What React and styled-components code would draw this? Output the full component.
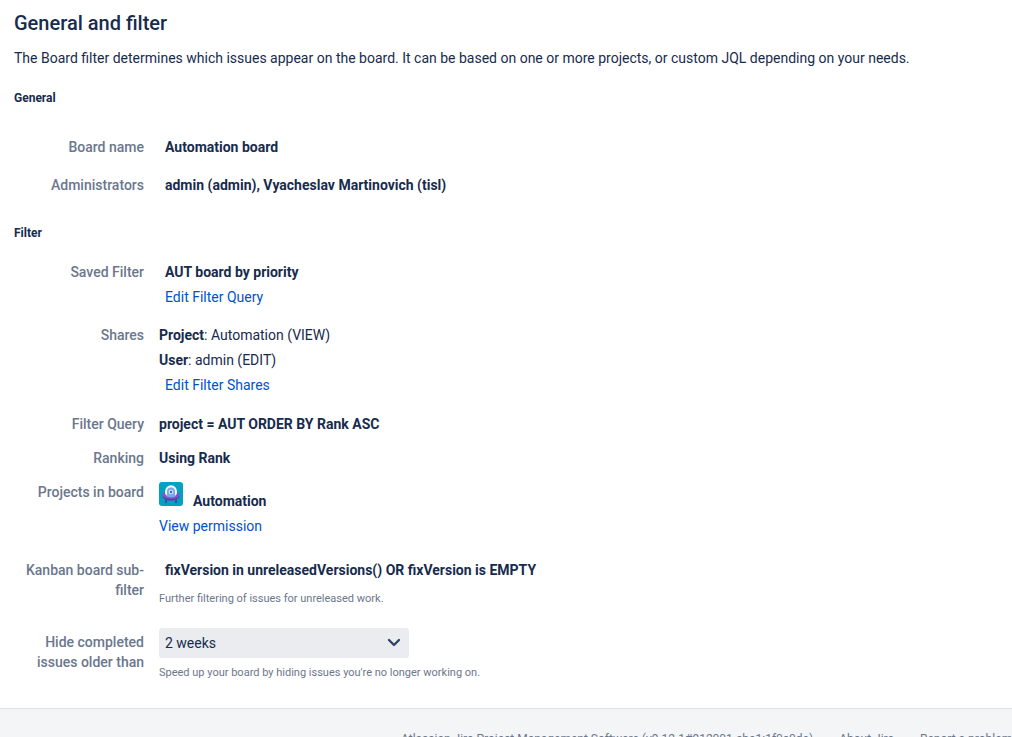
import styled, { createGlobalStyle } from "styled-components";

const GlobalStyle = createGlobalStyle`
  body {
    margin: 0;
    background-color: #ffffff;
    color: #172b4d;
    font-family: Roboto, "Liberation Sans", sans-serif;
    font-size: 14px;
    line-height: 20px;
    overflow-x: hidden;
  }
`;

const MainContent = styled.main`
  padding: 11px 14px 27px;
`;

const Title = styled.h2`
  margin: 0;
  font-size: 20px;
  font-weight: 500;
  line-height: 24px;
`;

const Description = styled.p`
  margin: 13px 0 22px;
`;

const SectionTitle = styled.h3`
  margin: 0;
  font-size: 12px;
  font-weight: 700;
  line-height: 16px;
`;

const Fields = styled.dl`
  display: flex;
  flex-direction: column;
  margin: ${(props) => props.$margin};
`;

const Field = styled.div`
  display: grid;
  grid-template-columns: 130px 1fr;
  column-gap: 15px;

  &:not(:first-child) {
    margin-top: ${(props) => props.$space || "18px"};
  }
`;

const FieldLabel = styled.dt`
  padding-top: ${(props) => (props.$control ? "4px" : "0")};
  color: #6b778c;
  font-weight: 500;
  text-align: right;
`;

const FieldValue = styled.dd`
  display: flex;
  flex-direction: column;
  align-items: flex-start;
  gap: 5px;
  margin: 0;
`;

const Editable = styled.strong`
  padding-left: 6px;
`;

const Link = styled.a`
  padding-left: ${(props) => (props.$indent ? "6px" : "0")};
  color: #0052cc;
  text-decoration: none;

  &:hover {
    text-decoration: underline;
  }
`;

const Help = styled.small`
  padding-top: ${(props) => (props.$space ? "6px" : "2px")};
  color: #6b778c;
  font-size: 11px;
  line-height: 16px;
`;

const Project = styled.div`
  display: flex;
  align-items: baseline;
  gap: 10px;
`;

const SelectBox = styled.div`
  position: relative;
  width: 250px;
  max-width: 100%;

  svg {
    position: absolute;
    top: 10px;
    right: 8px;
    pointer-events: none;
  }
`;

const Select = styled.select`
  appearance: none;
  display: block;
  width: 100%;
  height: 30px;
  padding: 0 30px 0 6px;
  border: 0;
  border-radius: 3px;
  background-color: #ebecf0;
  color: #172b4d;
  font: inherit;
`;

const Footer = styled.footer`
  padding: 21px 0 24px 401px;
  border-top: 1px solid #dfe1e5;
  background-color: #f4f5f7;
  overflow: hidden;
`;

const FooterList = styled.ul`
  display: flex;
  gap: 26px;
  margin: 0;
  padding: 0;
  list-style: none;
  color: #6b778c;
  font-size: 12px;
  line-height: 18px;
  white-space: nowrap;

  a {
    color: inherit;
    text-decoration: none;
  }
`;

function ProjectAvatar() {
  return (
    <svg width="24" height="24" viewBox="0 0 24 24" aria-hidden="true">
      <rect width="24" height="24" rx="3" fill="#00a3bf" />
      <path d="M7 17.5v3M17 17.5v3" stroke="#403294" strokeWidth="1.3" strokeLinecap="round" />
      <ellipse cx="12" cy="13.6" rx="9" ry="4.8" fill="#8053c6" />
      <path d="M3.2 14.3c1.3 5.6 16.3 5.6 17.6 0-3 3.4-14.6 3.4-17.6 0z" fill="#5e3ba8" />
      <path d="M6 10.6C6 6.2 8.4 3.3 12 3.3s6 2.9 6 7.3c0 5.8-12 5.8-12 0z" fill="#f1f5ff" />
      <path d="M8 14.6V9.4a4 4 0 0 1 8 0v5.2c-1.8 1.2-6.2 1.2-8 0z" fill="#79a8ee" />
      <circle cx="12" cy="10" r="2.3" fill="#deebff" />
      <circle cx="12" cy="10" r="1.2" fill="#3367b5" />
    </svg>
  );
}

function Chevron() {
  return (
    <svg width="14" height="10" viewBox="0 0 14 10" aria-hidden="true">
      <path d="m2 2 5 5 5-5" fill="none" stroke="#344563" strokeWidth="2.4" strokeLinecap="round" strokeLinejoin="round" />
    </svg>
  );
}

export default function App() {
  return (
    <>
      <GlobalStyle />
      <MainContent>
        <Title>General and filter</Title>
        <Description>
          The Board filter determines which issues appear on the board. It can be based on one or more projects, or
          custom JQL depending on your needs.
        </Description>

        <SectionTitle>General</SectionTitle>
        <Fields $margin="31px 0 30px">
          <Field>
            <FieldLabel>Board name</FieldLabel>
            <FieldValue>
              <Editable>Automation board</Editable>
            </FieldValue>
          </Field>
          <Field>
            <FieldLabel>Administrators</FieldLabel>
            <FieldValue>
              <Editable>admin (admin), Vyacheslav Martinovich (tisl)</Editable>
            </FieldValue>
          </Field>
        </Fields>

        <SectionTitle>Filter</SectionTitle>
        <Fields $margin="21px 0 0">
          <Field>
            <FieldLabel>Saved Filter</FieldLabel>
            <FieldValue>
              <Editable>AUT board by priority</Editable>
              <Link href="#query" $indent>Edit Filter Query</Link>
            </FieldValue>
          </Field>
          <Field>
            <FieldLabel>Shares</FieldLabel>
            <FieldValue>
              <span><strong>Project</strong>: Automation (VIEW)</span>
              <span><strong>User</strong>: admin (EDIT)</span>
              <Link href="#shares" $indent>Edit Filter Shares</Link>
            </FieldValue>
          </Field>
          <Field $space="19px">
            <FieldLabel>Filter Query</FieldLabel>
            <FieldValue>
              <strong>project = AUT ORDER BY Rank ASC</strong>
            </FieldValue>
          </Field>
          <Field $space="14px">
            <FieldLabel>Ranking</FieldLabel>
            <FieldValue>
              <strong>Using Rank</strong>
            </FieldValue>
          </Field>
          <Field $space="14px">
            <FieldLabel>Projects in board</FieldLabel>
            <FieldValue>
              <Project>
                <ProjectAvatar />
                <strong>Automation</strong>
              </Project>
              <Link href="#permission">View permission</Link>
            </FieldValue>
          </Field>
          <Field $space="24px">
            <FieldLabel>Kanban board sub-filter</FieldLabel>
            <FieldValue>
              <Editable>fixVersion in unreleasedVersions() OR fixVersion is EMPTY</Editable>
              <Help $space>Further filtering of issues for unreleased work.</Help>
            </FieldValue>
          </Field>
          <Field $space="21px">
            <FieldLabel $control>
              <label htmlFor="hide-completed">Hide completed issues older than</label>
            </FieldLabel>
            <FieldValue>
              <SelectBox>
                <Select id="hide-completed" defaultValue="2 weeks">
                  <option>1 week</option>
                  <option>2 weeks</option>
                  <option>4 weeks</option>
                </Select>
                <Chevron />
              </SelectBox>
              <Help>Speed up your board by hiding issues you're no longer working on.</Help>
            </FieldValue>
          </Field>
        </Fields>
      </MainContent>

      <Footer>
        <FooterList>
          <li>Atlassian Jira Project Management Software (v9.12.1#912001-sha1:1f0c0de)</li>
          <li><a href="#about">About Jira</a></li>
          <li><a href="#report">Report a problem</a></li>
        </FooterList>
      </Footer>
    </>
  );
}
